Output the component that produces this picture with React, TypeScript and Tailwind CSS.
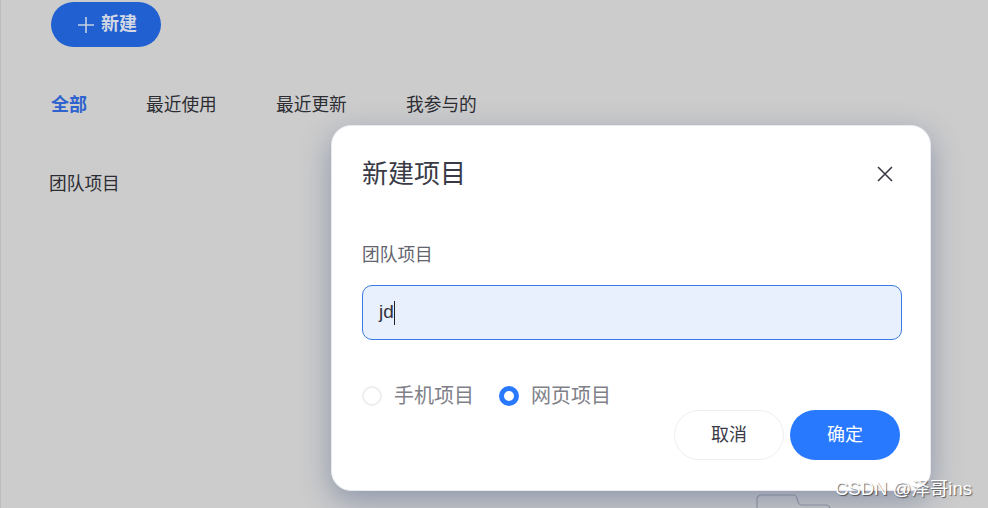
const cjk = "font-['Liberation_Sans','Noto_Sans_CJK_SC',sans-serif]";

const TABS = ['最近使用', '最近更新', '我参与的'];

export default function App() {
  return (
    <div className={`relative w-[988px] h-[508px] overflow-hidden bg-[#cccccc] ${cjk}`}>
      {/* Page behind the mask */}
      <div className="h-full border-l border-l-[#bcbcbc] pl-[50px] pt-[2px]">
        <button className="flex items-center w-[110px] h-[45px] rounded-full bg-[#2160d0] pl-[26px] text-[18px] font-bold text-[#d3d8e4]">
          <svg width="18" height="18" viewBox="0 0 18 18" className="mr-[6px]" fill="none" stroke="#c6cfe2" strokeWidth="1.6">
            <path d="M9 1v16M1 9h16" />
          </svg>
          新建
        </button>
        <div className="flex mt-[44px] h-[28px] items-center text-[17.7px] text-[#2c2c33]">
          <span className="w-[95px] text-[18px] font-bold text-[#2d62cf]">全部</span>
          <div className="flex gap-[60px]">
            {TABS.map((t) => (
              <span key={t} className="w-[70px] whitespace-nowrap">{t}</span>
            ))}
          </div>
        </div>
        <div className="mt-[51px] -ml-[2px] text-[17.7px] leading-[28px] text-[#2c2c33]">团队项目</div>
      </div>

      {/* Folder peeking out under the dialog */}
      <svg className="absolute left-[756px] top-[494px]" width="76" height="20" viewBox="0 0 76 20" fill="none" stroke="#989ca6" strokeWidth="1.2">
        <path d="M1 20V5a4 4 0 0 1 4-4h32a4 4 0 0 1 4 4l1 2a4 4 0 0 0 4 4h24a4 4 0 0 1 4 4v5" />
      </svg>

      {/* Dialog */}
      <div className="absolute left-[331px] top-[125px] w-[600px] h-[366px] rounded-[20px] border border-[#e8eaef] bg-white px-[30px] pt-[30px] shadow-[0_10px_30px_rgba(50,70,120,0.4)]">
        <div className="flex items-center justify-between h-[36px]">
          <span className="text-[26px] leading-[36px] text-[#3a3a46]">新建项目</span>
          <svg className="mr-[7px]" width="16" height="16" viewBox="0 0 16 16" fill="none" stroke="#3a3a46" strokeWidth="1.6">
            <path d="M1 1l14 14M15 1L1 15" />
          </svg>
        </div>
        <div className="mt-[49px] text-[17.7px] leading-[28px] text-[#63636e]">团队项目</div>
        <div className="mt-[16px] flex items-center w-[540px] h-[55px] rounded-[10px] border border-[#3b7ae6] bg-[#e8effd] pl-[16px] text-[19px] text-[#33333d]">
          jd<span className="w-px h-[24px] bg-[#222222]" />
        </div>
        <div className="flex items-center mt-[42px] h-[28px] text-[20px] text-[#808088]">
          <span className="w-[20px] h-[20px] rounded-full border-2 border-[#eeeeee]" />
          <span className="ml-[12px] w-[78px] whitespace-nowrap">手机项目</span>
          <span className="ml-[27px] w-[20px] h-[20px] rounded-full border-[5px] border-[#2979ff]" />
          <span className="ml-[12px] whitespace-nowrap">网页项目</span>
        </div>
        <div className="flex justify-end gap-[6px] text-[18px]">
          <button className="w-[110px] h-[50px] rounded-full border border-[#eeeeee] bg-white text-[#3a3a46]">取消</button>
          <button className="w-[110px] h-[50px] rounded-full bg-[#2979ff] text-white">确定</button>
        </div>
      </div>

      {/* CSDN watermark */}
      <span className="absolute left-[835px] top-[477px] text-[18.5px] leading-[24px] whitespace-nowrap text-white [text-shadow:1px_1px_1px_rgba(0,0,0,0.55)]">
        CSDN @泽哥ins
      </span>
    </div>
  );
}
